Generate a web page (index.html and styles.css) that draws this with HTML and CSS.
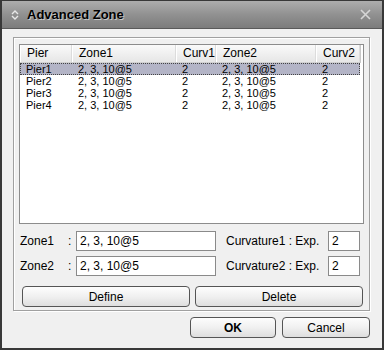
FILE: index.html
```html
<!DOCTYPE html>
<html lang="en">
<head>
    <meta charset="UTF-8">
    <title>Advanced Zone</title>
    <link rel="stylesheet" href="styles.css">
</head>
<body>
    <div class="window">
        <div class="titlebar">
            <svg class="titleicon" width="8" height="10" viewBox="0 0 8 10">
                <path d="M1 4 L4 1 L7 4 M1 6 L4 9 L7 6" fill="none" stroke="#e8e8e8" stroke-width="1.4"/>
            </svg>
            <span class="titletext">Advanced Zone</span>
            <svg class="closeicon" width="11" height="11" viewBox="0 0 11 11">
                <path d="M1 1 L10 10 M10 1 L1 10" stroke="#d6d6d6" stroke-width="1.6"/>
            </svg>
        </div>
        <div class="content">
            <div class="groupbox">
                <div class="listbox">
                    <div class="listhead">
                        <span>Pier</span><span>Zone1</span><span>Curv1</span><span>Zone2</span><span>Curv2</span>
                    </div>
                    <div class="listrow selected">
                        <span>Pier1</span><span>2, 3, 10@5</span><span>2</span><span>2, 3, 10@5</span><span>2</span>
                    </div>
                    <div class="listrow">
                        <span>Pier2</span><span>2, 3, 10@5</span><span>2</span><span>2, 3, 10@5</span><span>2</span>
                    </div>
                    <div class="listrow">
                        <span>Pier3</span><span>2, 3, 10@5</span><span>2</span><span>2, 3, 10@5</span><span>2</span>
                    </div>
                    <div class="listrow">
                        <span>Pier4</span><span>2, 3, 10@5</span><span>2</span><span>2, 3, 10@5</span><span>2</span>
                    </div>
                </div>
                <div class="fieldrow">
                    <label class="fieldlabel">Zone1</label>
                    <span class="colon">:</span>
                    <input class="field field--zone" type="text" value="2, 3, 10@5">
                    <label class="explabel">Curvature1 : Exp.</label>
                    <input class="field field--exp" type="text" value="2">
                </div>
                <div class="fieldrow">
                    <label class="fieldlabel">Zone2</label>
                    <span class="colon">:</span>
                    <input class="field field--zone" type="text" value="2, 3, 10@5">
                    <label class="explabel">Curvature2 : Exp.</label>
                    <input class="field field--exp" type="text" value="2">
                </div>
                <div class="buttonrow">
                    <button class="btn btn--wide">Define</button>
                    <button class="btn btn--wide">Delete</button>
                </div>
            </div>
            <div class="dialogbuttons">
                <button class="btn btn--ok">OK</button>
                <button class="btn btn--cancel">Cancel</button>
            </div>
        </div>
    </div>
</body>
</html>
```

FILE: styles.css
```css
body {
    margin: 0;
    padding: 0;
    width: 384px;
    height: 350px;
    font-family: "Liberation Sans", Arial, sans-serif;
    font-size: 12px;
    color: #000;
}
.window {
    width: 384px;
    height: 350px;
    box-sizing: border-box;
    border: 2px solid #383838;
    border-top-width: 1px;
    background: #f0f0f0;
    display: flex;
    flex-direction: column;
}
.titlebar {
    height: 27px;
    flex: none;
    display: flex;
    align-items: center;
    background: linear-gradient(#adadad, #919191 50%, #7c7c7c);
    border-bottom: 1px solid #5a5a5a;
}
.titleicon {
    margin-left: 9px;
    margin-right: 8px;
}
.titletext {
    font-weight: bold;
    font-size: 13px;
    text-shadow: 1px 1px 0 #c8c8c8;
}
.closeicon {
    margin-left: auto;
    margin-right: 11px;
}
.content {
    flex: 1;
    display: flex;
    flex-direction: column;
    padding: 8px 12px 0 11px;
}
.groupbox {
    height: 274px;
    box-sizing: border-box;
    border: 1px solid #a0a0a0;
    box-shadow: inset 1px 1px 0 #fff, 1px 1px 0 #fff;
    padding: 6px 5px 0 5px;
    display: flex;
    flex-direction: column;
}
.listbox {
    height: 180px;
    box-sizing: border-box;
    border: 1px solid #8c8c8c;
    background: #fff;
    flex: none;
}
.listhead,
.listrow {
    display: grid;
    grid-template-columns: 52px 104px 40px 100px 44px;
    width: 340px;
}
.listhead {
    height: 17px;
    line-height: 17px;
    background: linear-gradient(#fafafa, #e6e6e6);
    border-bottom: 1px solid #d0d0d0;
    border-right: 1px solid #c8c8c8;
}
.listhead span {
    padding-left: 6px;
    border-left: 1px solid #fff;
    border-right: 1px solid #dcdcdc;
}
.listrow {
    height: 12px;
    line-height: 12px;
    font-size: 11px;
}
.listrow span {
    padding-left: 6px;
}
.selected {
    background: #b3b4c6;
    outline: 1px dotted #444;
    outline-offset: -1px;
}
.fieldrow {
    display: flex;
    align-items: center;
    height: 20px;
    margin-top: 5px;
}
.listbox + .fieldrow {
    margin-top: 7px;
}
.fieldlabel {
    width: 48px;
    padding-left: 1px;
}
.colon {
    width: 8px;
}
.field {
    box-sizing: border-box;
    height: 20px;
    border: 1px solid #8a8a8a;
    background: #fff;
    font-family: "Liberation Sans", Arial, sans-serif;
    font-size: 12px;
    padding: 0 3px;
    margin: 0;
}
.field--zone {
    width: 140px;
}
.field--exp {
    width: 32px;
}
.explabel {
    margin-left: 10px;
    width: 102px;
}
.buttonrow {
    display: flex;
    gap: 5px;
    margin-top: 10px;
    padding-left: 3px;
}
.btn {
    box-sizing: border-box;
    height: 21px;
    border: 1px solid #555;
    border-radius: 4px;
    background: linear-gradient(#fdfdfd, #f0f0f0 50%, #dedede);
    font-family: "Liberation Sans", Arial, sans-serif;
    font-size: 12px;
    color: #000;
    padding: 0;
}
.btn--wide {
    width: 168px;
}
.dialogbuttons {
    display: flex;
    justify-content: flex-end;
    gap: 6px;
    margin-top: 6px;
}
.btn--ok {
    width: 86px;
    font-weight: bold;
}
.btn--cancel {
    width: 88px;
}
```
